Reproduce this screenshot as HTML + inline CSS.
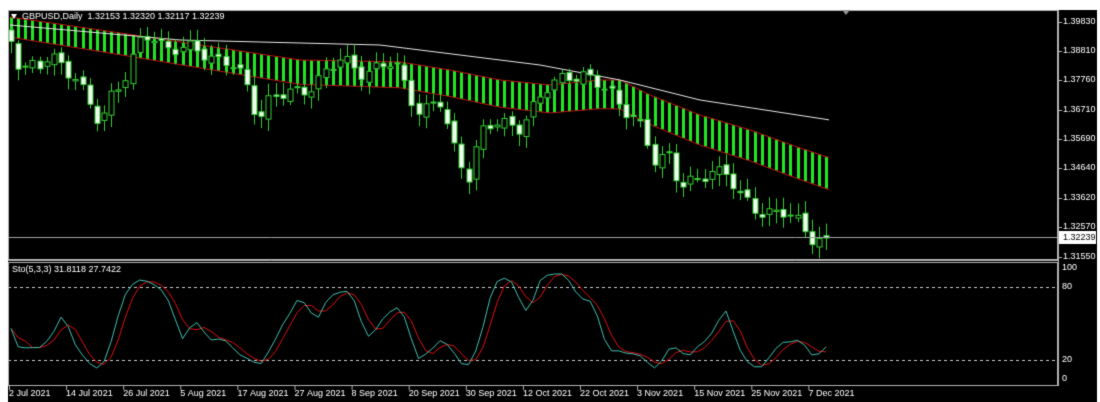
<!DOCTYPE html>
<html><head><meta charset="utf-8"><style>
html,body{margin:0;padding:0;background:#fff;width:1100px;height:402px;overflow:hidden}
canvas{position:absolute;left:0;top:0}
</style></head><body>
<canvas id="c" width="1100" height="402"></canvas>
<script>
var c=document.getElementById('c'),g=c.getContext('2d');
g.fillStyle='#fff';g.fillRect(0,0,1100,402);
g.fillStyle='#000';g.fillRect(8,10,1089,392);
function ln(x1,y1,x2,y2,col,w){g.strokeStyle=col;g.lineWidth=w||1;g.beginPath();g.moveTo(x1,y1);g.lineTo(x2,y2);g.stroke();}
function interp(pts,x){for(var i=0;i<pts.length-1;i++){if(x<=pts[i+1][0]){var t=(x-pts[i][0])/(pts[i+1][0]-pts[i][0]);return pts[i][1]+t*(pts[i+1][1]-pts[i][1]);}}return pts[pts.length-1][1];}
var path=[[10,35],[20,65],[40,70],[50,55],[60,62],[75,75],[90,110],[100,125],[110,95],[125,75],[140,45],[150,35],[165,45],[185,50],[210,55],[230,62],[245,85],[258,118],[270,95],[300,95],[320,75],[340,62],[360,70],[395,65],[410,95],[420,110],[440,105],[455,150],[468,175],[480,135],[500,122],[520,125],[535,108],[550,85],[565,72],[590,82],[610,88],[625,110],[640,130],[655,160],[668,150],[680,188],[695,185],[710,168],[725,170],[740,200],[760,210],[780,212],[800,225],[815,238],[830,238]];
var N=115,X=function(i){return 11+i*7.15;};
var C=[],O=[],H=[],L=[];
for(var i=0;i<N;i++){var y=interp(path,X(i))+Math.sin(i*1.7)*6+Math.sin(i*0.9+1)*4;if(i==N-1)y=238;C.push(y);}
for(var i=0;i<N;i++){O[i]=i?C[i-1]+Math.sin(i*2.3)*3:30;var w1=3+Math.abs(Math.sin(i*3.1))*9,w2=3+Math.abs(Math.cos(i*2.7))*9;H[i]=Math.min(O[i],C[i])-w1;L[i]=Math.max(O[i],C[i])+w2;}
var white=[[10,25],[180,40],[380,45],[540,65],[620,80],[700,100],[830,120]];
var band=[[10,17],[100,30],[200,45],[300,60],[400,62],[450,70],[500,80],[550,85],[600,80],[620,80],[650,95],[700,115],[750,130],[800,148],[830,158]];
for(var i=0;i<N;i++){var x=X(i),u=interp(band,x),h=20+x/830*12;g.fillStyle='#22e622';g.fillRect(Math.round(x)-1,u,3,h);}
g.strokeStyle='#c01010';g.lineWidth=1;
[0,1].forEach(function(k){g.beginPath();for(var x=10;x<=831;x+=3){var u=interp(band,x)+(k?20+x/830*12:0);x==10?g.moveTo(x,u):g.lineTo(x,u);}g.stroke();});
g.strokeStyle='#e8e8e8';g.beginPath();for(var x=10;x<=831;x+=3){var u=interp(white,x);x==10?g.moveTo(x,u):g.lineTo(x,u);}g.stroke();
for(var i=0;i<N;i++){var x=Math.round(X(i))+0.5;ln(x,H[i],x,L[i],'#32cd32',1);var t=Math.min(O[i],C[i]),b=Math.max(O[i],C[i]);if(b-t<1)b=t+1;
g.fillStyle=C[i]<O[i]?'#000':'#f0fff0';g.fillRect(x-2.5,t,5,b-t);g.strokeStyle='#32cd32';g.strokeRect(x-2.5,t,5,b-t);}
ln(8,237.5,1058,237.5,'#a0a0a0',1);
var K=[],D=[],raw=[];
for(var i=0;i<N;i++){var lo=-1e9,hi=1e9;for(var j=Math.max(0,i-4);j<=i;j++){lo=Math.max(lo,L[j]);hi=Math.min(hi,H[j]);}raw.push([lo-C[i],lo-hi]);}
for(var i=0;i<N;i++){var a=0,b=0;for(var j=Math.max(0,i-2);j<=i;j++){a+=raw[j][0];b+=raw[j][1];}K.push(b?a/b*100:50);}
for(var i=0;i<N;i++){var s=0,n=0;for(var j=Math.max(0,i-2);j<=i;j++){s+=K[j];n++;}D.push(s/n);}
function sy(v){return 379-v*1.11;}
g.setLineDash([3,3]);ln(8,287.5,1058,287.5,'#c8c8c8',1);ln(8,360.5,1058,360.5,'#c8c8c8',1);g.setLineDash([]);
[[D,'#e01010'],[K,'#40c0b0']].forEach(function(p){g.strokeStyle=p[1];g.beginPath();for(var i=0;i<N;i++){var y=sy(p[0][i]);i?g.lineTo(X(i),y):g.moveTo(X(i),y);}g.stroke();});
g.strokeStyle='#b0b0b0';g.lineWidth=1;
g.strokeRect(8.5,10.5,1049,249);
g.strokeRect(8.5,262.5,1049,123);
ln(8,260.5,1058,260.5,'#b0b0b0');
ln(1058.5,10,1058.5,386,'#b0b0b0');
g.fillStyle='#909090';g.beginPath();g.moveTo(842,10);g.lineTo(850,10);g.lineTo(846,15);g.fill();
g.font='9px "Liberation Sans", sans-serif';g.textBaseline='middle';g.fillStyle='#fff';
g.beginPath();g.moveTo(11,14);g.lineTo(17,14);g.lineTo(14,19);g.fill();
g.fillText('GBPUSD,Daily  1.32153 1.32320 1.32117 1.32239',22,17);
g.fillText('Sto(5,3,3) 31.8118 27.7422',12,270);
var pl=[['1.39830',22],['1.38810',51],['1.37760',80],['1.36710',110],['1.35690',139],['1.34640',168],['1.33620',198],['1.32570',227],['1.31550',257]];
pl.forEach(function(p){ln(1058,p[1]+0.5,1062,p[1]+0.5,'#b0b0b0');g.fillStyle='#fff';g.fillText(p[0],1063,p[1]);});
g.fillStyle='#fff';g.fillRect(1059,231,37,13);g.fillStyle='#000';g.fillText('1.32239',1063,238);
g.fillStyle='#fff';
[['100',268],['80',287],['20',360],['0',379]].forEach(function(p){g.fillText(p[0],1062,p[1]);});
var dl=['2 Jul 2021','14 Jul 2021','26 Jul 2021','5 Aug 2021','17 Aug 2021','27 Aug 2021','8 Sep 2021','20 Sep 2021','30 Sep 2021','12 Oct 2021','22 Oct 2021','3 Nov 2021','15 Nov 2021','25 Nov 2021','7 Dec 2021'];
dl.forEach(function(t,k){var x=9+k*57.1;ln(x+0.5,386,x+0.5,390,'#b0b0b0');g.fillStyle='#fff';g.fillText(t,x,394);});
</script>
</body></html>
